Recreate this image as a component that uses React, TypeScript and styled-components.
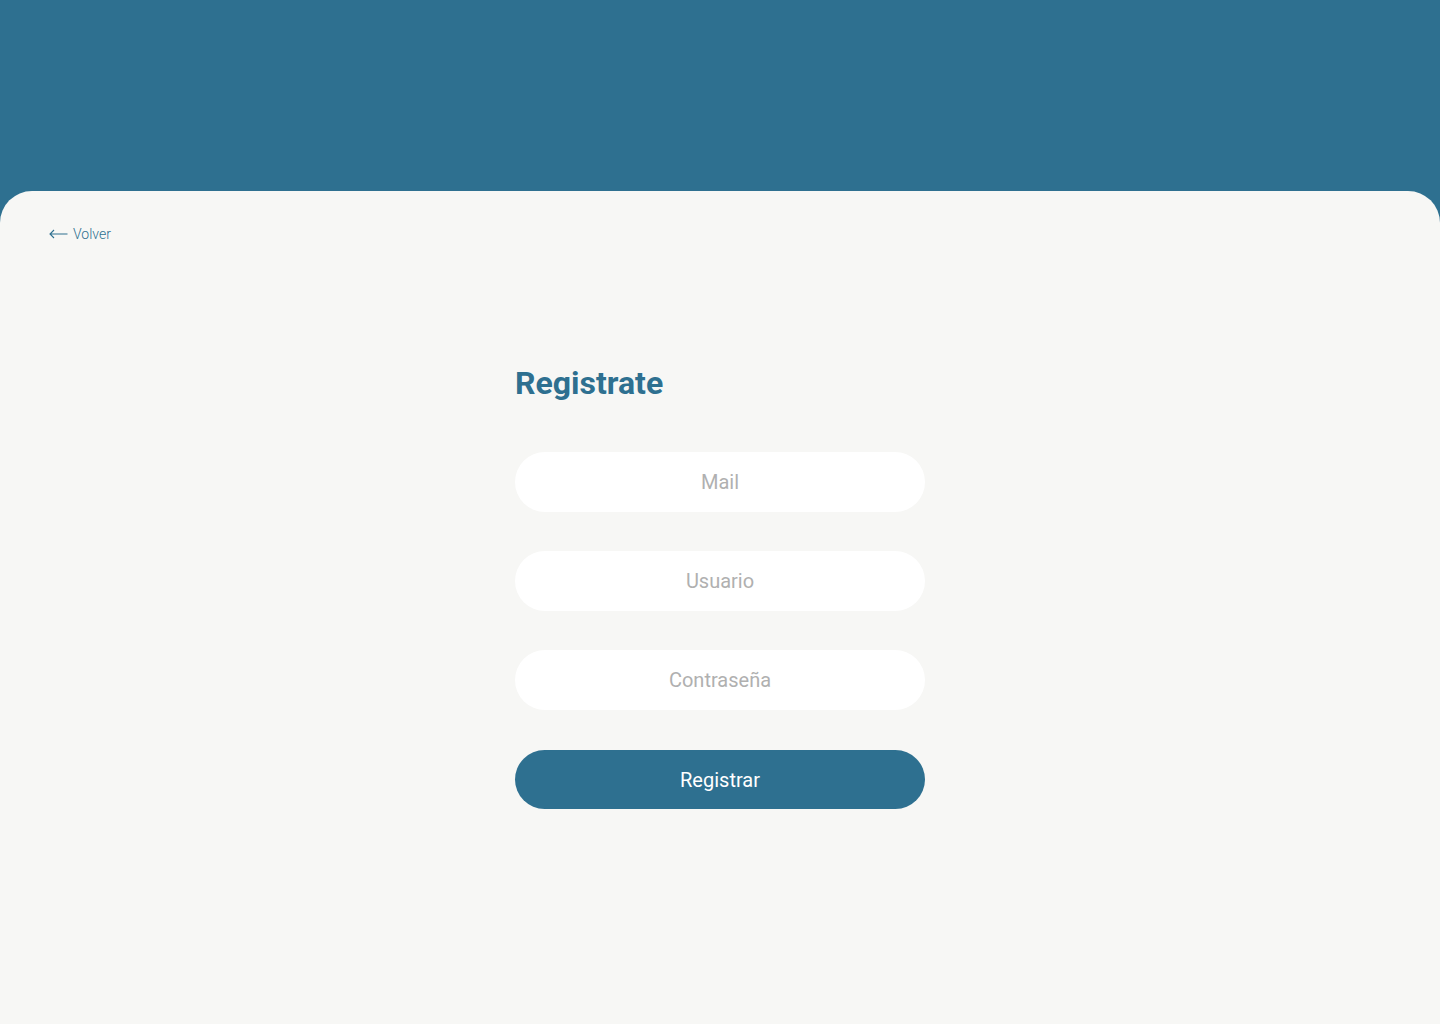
import React from "react";
import styled, { createGlobalStyle } from "styled-components";

const GlobalStyle = createGlobalStyle`
  html, body {
    margin: 0;
    padding: 0;
    background: #2e7090;
    font-family: Roboto, "Liberation Sans", sans-serif;
  }
  * {
    box-sizing: border-box;
  }
`;

const Page = styled.div`
  display: flex;
  flex-direction: column;
  min-height: 1024px;
`;

const Header = styled.header`
  height: 191px;
  background: #2e7090;
`;

const Panel = styled.main`
  flex: 1;
  display: flex;
  flex-direction: column;
  background: #f7f7f5;
  border-radius: 32px 32px 0 0;
  padding: 34px 49px;
`;

const BackLink = styled.a`
  display: inline-flex;
  align-items: center;
  gap: 5px;
  align-self: flex-start;
  height: 18px;
  color: #2e7090;
  font-size: 14px;
  font-weight: 300;
  text-decoration: none;
  cursor: pointer;
`;

const Form = styled.form`
  display: flex;
  flex-direction: column;
  gap: 39px;
  width: 410px;
  margin: 121px auto 0;
`;

const Title = styled.h1`
  margin: 0 0 11px;
  color: #2e7090;
  font-size: 32px;
  font-weight: 700;
  line-height: 38px;
`;

const Input = styled.input`
  height: 60px;
  width: 100%;
  border: none;
  border-radius: 30px;
  background: #ffffff;
  text-align: center;
  font-family: Roboto, "Liberation Sans", sans-serif;
  font-size: 20px;
  color: #555;
  outline: none;

  &::placeholder {
    color: #b0b0b0;
  }
`;

const Submit = styled.button`
  height: 59px;
  margin-top: 1px;
  border: none;
  border-radius: 30px;
  background: #2e7090;
  color: #ffffff;
  font-family: Roboto, "Liberation Sans", sans-serif;
  font-size: 20px;
  cursor: pointer;
`;

const ArrowLeft = () => (
  <svg width="19" height="10" viewBox="0 0 19 10" fill="none">
    <path d="M18.5 5H1M5 1L1 5l4 4" stroke="#2e7090" strokeWidth="1.1" />
  </svg>
);

export default function App() {
  return (
    <>
      <GlobalStyle />
      <Page>
        <Header />
        <Panel>
          <BackLink>
            <ArrowLeft />
            Volver
          </BackLink>
          <Form onSubmit={(e) => e.preventDefault()}>
            <Title>Registrate</Title>
            <Input type="email" placeholder="Mail" />
            <Input type="text" placeholder="Usuario" />
            <Input type="password" placeholder="Contraseña" />
            <Submit type="submit">Registrar</Submit>
          </Form>
        </Panel>
      </Page>
    </>
  );
}
